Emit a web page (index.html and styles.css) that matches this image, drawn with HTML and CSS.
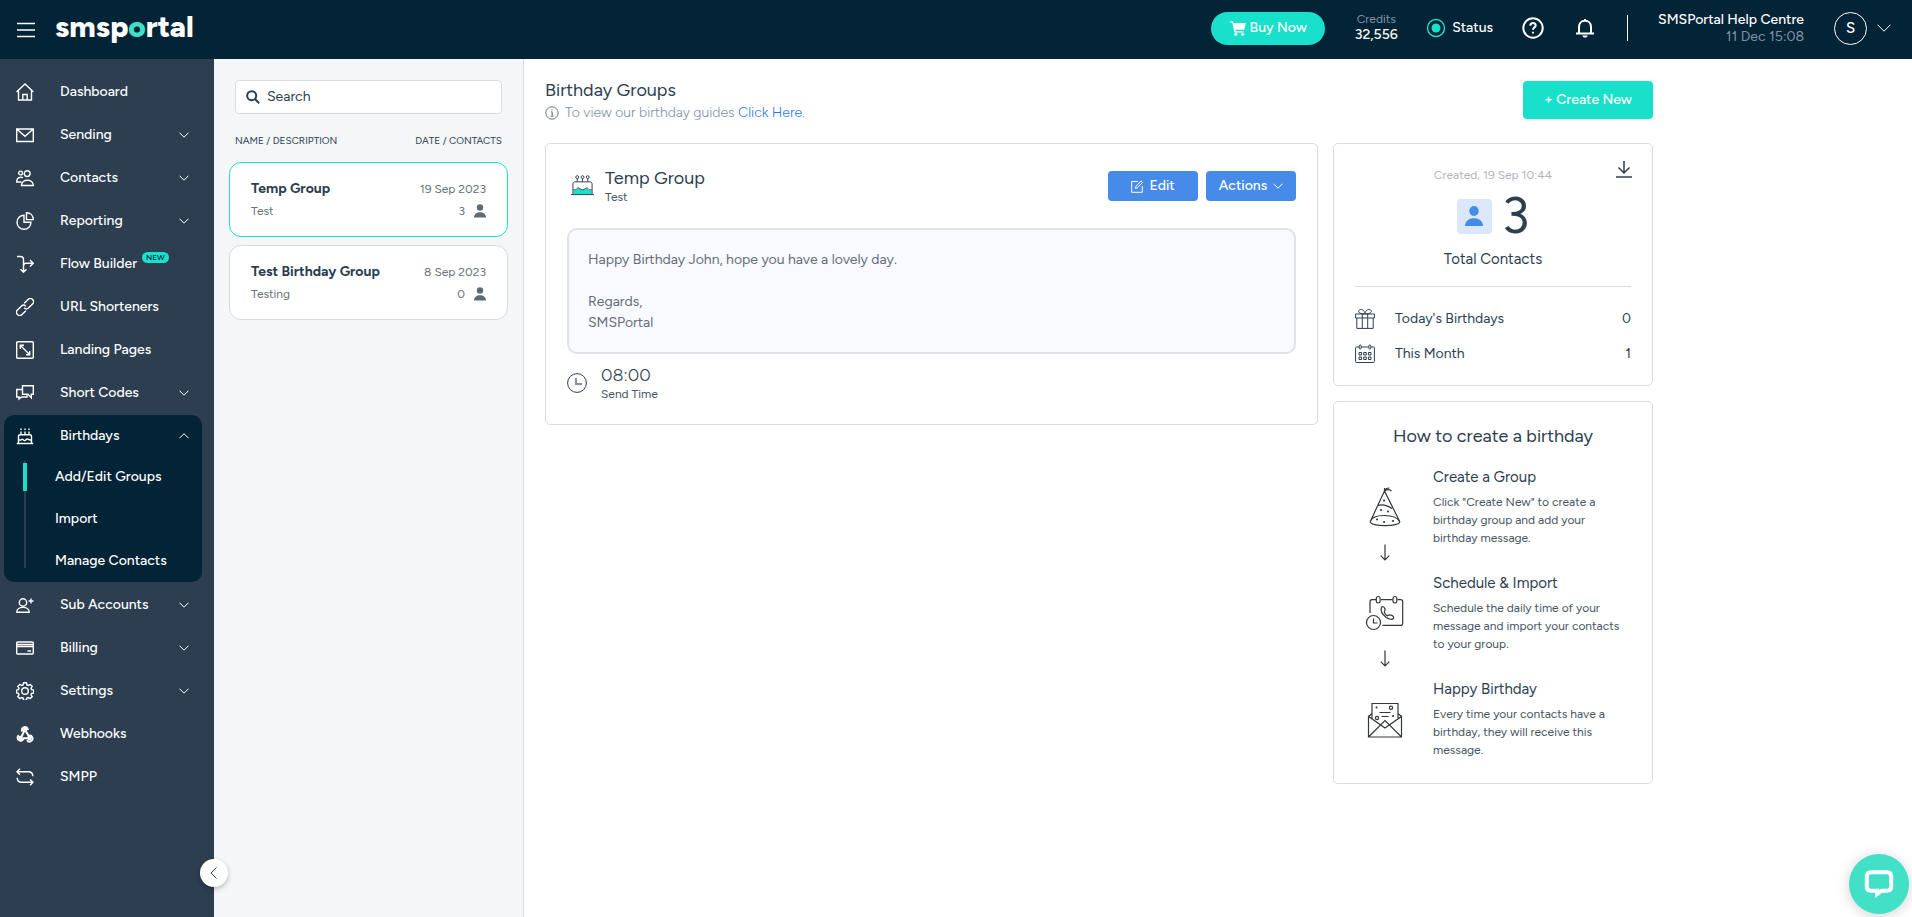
FILE: index.html
```
<!DOCTYPE html>
<html lang="en">
<head>
<meta charset="utf-8">
<meta name="viewport" content="width=device-width, initial-scale=1">
<title>Birthday Groups</title>
<link rel="stylesheet" href="styles.css">
</head>
<body>
<header class="topbar">
  <div class="brand">
    <button class="icon-btn" aria-label="Toggle menu"><svg class="i18" viewBox="0 0 18 18"><path d="M0 2.500h18M0 9h18M0 15.500h18"/></svg></button>
    <a class="logo" href="#">smsp<span class="logo-o">o</span>rtal</a>
  </div>
  <div class="top-actions">
    <button class="buy"><svg class="i16 solid" viewBox="0 0 16 16"><path d="M0 1.200h3l.5 1.800h12.300l-1.600 6.800H5.300l.3 1.400h8v1.400H4.400L2.200 2.600H0z"/><circle cx="5.800" cy="14.200" r="1.500"/><circle cx="12.600" cy="14.200" r="1.500"/></svg>Buy Now</button>
    <div class="credits"><span class="muted">Credits</span><span>32,556</span></div>
    <a class="status" href="#"><svg class="i20" viewBox="0 0 20 20"><circle class="teal-line" cx="10" cy="10" r="8.500"/><circle class="teal-fill" cx="10" cy="10" r="4.500"/></svg>Status</a>
    <button class="icon-btn help" aria-label="Help"><svg class="i22" viewBox="0 0 22 22"><circle cx="11" cy="11" r="9.700"/><path d="M8.300 8.800c0-3.700 5.400-3.500 5.400-.4 0 2-2.700 2-2.700 4.400M11 14.800v1.700"/></svg></button>
    <button class="icon-btn bell" aria-label="Notifications"><svg class="i22" viewBox="0 0 22 22"><path d="M2 16.500h18M5 16.300V10c0-8.500 12-8.500 12 0v6.300M11 3.500V2"/><path class="solid" d="M8.300 18.500h5.400c-.6 2.800-4.800 2.800-5.400 0z"/></svg></button>
    <span class="divider"></span>
    <div class="account"><span>SMSPortal Help Centre</span><span class="muted date">11 Dec 15:08</span></div>
    <button class="user" aria-label="Account menu"><span class="avatar">S</span><svg class="chev14" viewBox="0 0 14 8"><path d="M.5.700 7 7.200 13.500.700"/></svg></button>
  </div>
</header>

<div class="shell">
  <nav class="sidebar" aria-label="Main">
    <a class="nav-item" href="#"><svg class="i18" viewBox="0 0 18 18"><path d="M.5 9 9 1l8.500 8M2.500 7.500V17h13V7.500M6.800 17v-5.500h4.400V17"/></svg><span>Dashboard</span></a>
    <a class="nav-item" href="#"><svg class="i18" viewBox="0 0 18 18"><path d="M.7 3h16.600v12.500H.7zM1 3.300l8 7 8-7"/></svg><span>Sending</span><svg class="chev" viewBox="0 0 10 6"><path d="M.5.700 5 5.200 9.500.700"/></svg></a>
    <a class="nav-item" href="#"><svg class="i18" viewBox="0 0 18 18"><circle cx="11.200" cy="4.600" r="2.900"/><circle cx="4.600" cy="4" r="1.900"/><path d="M5.500 16.500h11.800c0-7-11.800-7-11.800 0zM5.500 13H.7c0-4 2.500-5.500 6.300-4.300"/></svg><span>Contacts</span><svg class="chev" viewBox="0 0 10 6"><path d="M.5.700 5 5.200 9.500.700"/></svg></a>
    <a class="nav-item" href="#"><svg class="i18" viewBox="0 0 18 18"><path d="M8 3.200a7 7 0 1 0 7 7H8zM10.500.800v6.800h6.800c0-4-2.800-6.800-6.800-6.800z"/></svg><span>Reporting</span><svg class="chev" viewBox="0 0 10 6"><path d="M.5.700 5 5.200 9.500.700"/></svg></a>
    <a class="nav-item" href="#"><svg class="i18" viewBox="0 0 18 18"><path d="M1 1.500h3.500c2 0 3 1 3 3V17M4.500 14.200l3 3 3-3M7.500 11c0-2 1-2.700 2.500-2.700h7M14 5l3.300 3.300-3.300 3.300"/></svg><span>Flow Builder</span><b class="new">NEW</b></a>
    <a class="nav-item" href="#"><svg class="i18" viewBox="0 0 18 18"><g transform="rotate(-45 9 9)"><path d="M7 12.200H1.500a3.200 3.200 0 0 1 0-6.400H7a3.200 3.200 0 0 1 3.200 3.200M11 5.800h5.500a3.200 3.200 0 0 1 0 6.400H11A3.200 3.200 0 0 1 7.800 9"/></g></svg><span>URL Shorteners</span></a>
    <a class="nav-item" href="#"><svg class="i18" viewBox="0 0 18 18"><rect x=".7" y=".7" width="16.600" height="16.600" rx="1"/><path d="m4.500 4.500 9 9M4.300 8V4.300H8M13.700 10v3.700H10"/></svg><span>Landing Pages</span></a>
    <a class="nav-item" href="#"><svg class="i18" viewBox="0 0 18 18"><path d="M6.500 1.700h10.800v8.500h-2v3.500L12 10.200H6.500zM6.500 5.500H.7V13H3v2l2.500-2H11v-2.500"/></svg><span>Short Codes</span><svg class="chev" viewBox="0 0 10 6"><path d="M.5.700 5 5.200 9.500.700"/></svg></a>
    <div class="nav-group">
      <a class="nav-item" href="#"><svg class="i18" viewBox="0 0 18 18"><path d="M.8 16.500h16.400M2.500 16.500V9.300c0-1 .7-1.600 1.600-1.600h9.800c.9 0 1.600.6 1.600 1.600v7.200M2.500 12.500c2.200 2 3.300-1 4.400 0s1.800 2 3.300 0 2.600 2 5.300 0M5 7.700V4.500M9 7.700V4.500M13 7.700V4.500M5 3V1.500M9 3V1.500M13 3V1.500"/></svg><span>Birthdays</span><svg class="chev" viewBox="0 0 10 6"><path d="M.5 5.200 5 .700l4.500 4.500"/></svg></a>
      <div class="subnav">
        <a class="sub active" href="#">Add/Edit Groups</a>
        <a class="sub" href="#">Import</a>
        <a class="sub" href="#">Manage Contacts</a>
      </div>
    </div>
    <a class="nav-item" href="#"><svg class="i18" viewBox="0 0 18 18"><circle cx="7" cy="6.500" r="3.700"/><path d="M.8 16.200h12.400c0-6.500-12.400-6.500-12.400 0zM15 2.500v5M12.500 5h5"/></svg><span>Sub Accounts</span><svg class="chev" viewBox="0 0 10 6"><path d="M.5.700 5 5.200 9.500.700"/></svg></a>
    <a class="nav-item" href="#"><svg class="i18" viewBox="0 0 18 18"><rect x=".7" y="3" width="16.600" height="12" rx="1"/><path d="M1 5.500h16M1 7.500h16M11.500 12H15"/></svg><span>Billing</span><svg class="chev" viewBox="0 0 10 6"><path d="M.5.700 5 5.200 9.500.700"/></svg></a>
    <a class="nav-item" href="#"><svg class="i18" viewBox="0 0 18 18"><circle cx="9" cy="9" r="3.300"/><path d="M7.500.800h3l.4 2.100 1.400.600 1.800-1.200 2.100 2.100-1.200 1.800.6 1.400 2.100.400v3l-2.100.400-.6 1.400 1.200 1.800-2.100 2.100-1.800-1.200-1.400.6-.4 2.100h-3l-.4-2.100-1.400-.6-1.800 1.200-2.100-2.100 1.200-1.800-.6-1.400L.5 11V8l1.900-.4.6-1.400-1.200-1.800 2.100-2.100 1.800 1.200 1.400-.6z"/></svg><span>Settings</span><svg class="chev" viewBox="0 0 10 6"><path d="M.5.700 5 5.200 9.500.700"/></svg></a>
    <a class="nav-item" href="#"><svg class="i18 thick" viewBox="0 0 18 18"><circle cx="9" cy="5" r="1.200"/><circle cx="4.500" cy="13" r="1.200"/><circle cx="13.500" cy="13" r="1.200"/><path d="M6.300 6.500a3 3 0 1 1 5.600-1.500M8.500 5.500 5 12.500M2.800 10.300a3 3 0 1 0 4.700 3h5.500M9.500 5.500l3 5.200a3 3 0 1 1-1.500 4.500"/></svg><span>Webhooks</span></a>
    <a class="nav-item" href="#"><svg class="i18" viewBox="0 0 18 18"><path d="M4 .800 1 3.700l3 3M1.300 3.700h11c3 0 4.500 1.500 4.500 4.500M14 11.500l3 2.800-3 3M16.700 14.300h-11c-3 0-4.500-1.500-4.500-4.500"/></svg><span>SMPP</span></a>
    <button class="collapse" aria-label="Collapse sidebar"><svg viewBox="0 0 8 12" width="8" height="12"><path d="M6.500.500 1 6l5.500 5.500"/></svg></button>
  </nav>

  <aside class="groups">
    <label class="search"><svg class="i14" viewBox="0 0 14 14"><circle cx="5.700" cy="5.700" r="4.500"/><path d="m9 9 4.200 4.200"/></svg><input type="text" placeholder="Search" aria-label="Search"></label>
    <div class="list-head"><span>NAME / DESCRIPTION</span><span>DATE / CONTACTS</span></div>
    <a class="group selected" href="#">
      <span class="row"><strong>Temp Group</strong><span>19 Sep 2023</span></span>
      <span class="row"><span>Test</span><span class="count">3<svg viewBox="0 0 12 14" width="12" height="14"><circle cx="6" cy="3.500" r="3.200"/><path d="M0 13.500C0 6.500 12 6.500 12 13.500z"/></svg></span></span>
    </a>
    <a class="group" href="#">
      <span class="row"><strong>Test Birthday Group</strong><span>8 Sep 2023</span></span>
      <span class="row"><span>Testing</span><span class="count">0<svg viewBox="0 0 12 14" width="12" height="14"><circle cx="6" cy="3.500" r="3.200"/><path d="M0 13.500C0 6.500 12 6.500 12 13.500z"/></svg></span></span>
    </a>
  </aside>

  <main class="main">
    <div class="page-head">
      <div>
        <h1>Birthday Groups</h1>
        <p class="hint"><svg viewBox="0 0 14 14" width="14" height="14"><circle cx="7" cy="7" r="6.200"/><path d="M6 6h1.200v4M5.600 10.200h3M7 3.300v1.300"/></svg><span>To view our birthday guides <a href="#">Click Here</a>.</span></p>
      </div>
      <button class="create">+ Create New</button>
    </div>
    <div class="columns">
      <section class="card detail">
        <div class="detail-head">
          <svg class="cake" viewBox="0 0 24 22"><path class="teal-fill" d="M2.500 21v-5c3 2 3.500-1.500 5-1.500s2 2 4.500 2 3-2 4.500-2 2 3.500 5 1.500v5z"/><path d="M0 21h24M2 21V10c0-1.500 1-2.300 2.300-2.300h15.400c1.300 0 2.300.8 2.300 2.300v11M2.500 15.500c3 2 3.500-1.500 5-1.500s2 2 4.500 2 3-2 4.500-2 2 3.500 5 1.500M6.500 7.500V4.500M12 7.500V4.500M17.500 7.500V4.500"/><circle cx="6.500" cy="2.800" r="1.500"/><circle cx="12" cy="2.800" r="1.500"/><circle cx="17.500" cy="2.800" r="1.500"/></svg>
          <div class="grow"><h2>Temp Group</h2><p class="small">Test</p></div>
          <button class="action"><svg viewBox="0 0 12 13" width="12" height="13"><path d="M7 1.500H.7v10.800h10.600V6M4.500 8.500l.5-2.300L10 .9l1.500 1.500-5 5.400z"/></svg>Edit</button>
          <button class="action">Actions<svg viewBox="0 0 10 6" width="10" height="6"><path d="M.5.700 5 5.200 9.500.700"/></svg></button>
        </div>
        <div class="message">Happy Birthday John, hope you have a lovely day.<br><br>Regards,<br>SMSPortal</div>
        <div class="send">
          <svg viewBox="0 0 20 20" width="20" height="20"><circle cx="10" cy="10" r="9.400"/><path class="hands" d="M9 5v6h6"/></svg>
          <div><p class="time">08:00</p><p class="small">Send Time</p></div>
        </div>
      </section>
      <div class="side">
        <section class="card stats">
          <button class="download" aria-label="Download"><svg viewBox="0 0 16 17" width="16" height="17"><path d="M8 0v12M2.500 6.500 8 12l5.500-5.500M0 16h16"/></svg></button>
          <p class="created">Created, 19 Sep 10:44</p>
          <div class="total"><span class="tile"><svg viewBox="0 0 18 20" width="18" height="20"><ellipse cx="9" cy="5" rx="4.700" ry="5"/><path d="M0 20c0-10.500 18-10.500 18 0z"/></svg></span><span class="num">3</span></div>
          <p class="total-label">Total Contacts</p>
          <hr>
          <div class="stat"><svg viewBox="0 0 20 20" width="20" height="20"><path d="M.6 5h18.800v4H.6zM1.800 9v10.400h16.400V9M7.300 5v14M12.700 5v14M10 4.800C8 5 3.500 4.500 3.700 2.300 4-1 9.500 0 10 4.800c.5-4.800 6-5.800 6.300-2.500C16.500 4.500 12 5 10 4.800z"/></svg><span class="grow">Today's Birthdays</span><span>0</span></div>
          <div class="stat"><svg viewBox="0 0 20 20" width="20" height="20"><path d="M4 3H1.500C1 3 .6 3.400.6 4v13.500c0 .6.4 1 1 1h16.800c.6 0 1-.4 1-1V4c0-.6-.4-1-1-1H16M6.500 3h7"/><rect x="4.200" y="1" width="2" height="4" rx="1"/><rect x="13.800" y="1" width="2" height="4" rx="1"/><path d="M4 8.500h2.600V11H4zM8.700 8.500h2.600V11H8.700zM13.400 8.500H16V11h-2.600zM4 13h2.600v2.500H4zM8.700 13h2.600v2.500H8.700zM13.400 13H16v2.500h-2.600z"/></svg><span class="grow">This Month</span><span>1</span></div>
        </section>
        <section class="card howto">
          <h2>How to create a birthday</h2>
          <div class="step">
            <div class="art">
              <svg viewBox="0 0 32 40" width="32" height="40"><path d="M15.500 4 1.300 34.500c-.8 5.500 30.200 5.500 29.400 0zM1.300 34.500C4 26 27 27 30.500 34.500M9 18.500c5-1.800 9.500 0 14 3M15.500 4c1-3 3-3 5-3M15.500 4c2-1.500 5-1.500 7 0M15.500 4V1"/><path class="dots" d="M15 13.500h.1M12 23h.1M19 24.500h.1M8 32.500h.1M15 35h.1M24 34h.1"/></svg>
              <svg class="arrow" viewBox="0 0 10 17" width="10" height="17"><path d="M5 .500v15.500M.700 11.700 5 16l4.300-4.300"/></svg>
            </div>
            <div><h3>Create a Group</h3><p>Click "Create New" to create a birthday group and add your birthday message.</p></div>
          </div>
          <div class="step">
            <div class="art">
              <svg viewBox="0 0 40 40" width="40" height="40"><path d="M5 20V9c0-1.500.8-2.300 2-2.300h4M16 6.700h11.500M32.500 6.700h3.200c1.200 0 2 .8 2 2v21.500c0 1.500-.8 2.200-2 2.200H17.500"/><rect x="11.300" y="3.500" width="3.800" height="6.500" rx="1.900"/><rect x="28" y="3.500" width="3.800" height="6.500" rx="1.900"/><circle cx="8.500" cy="29.500" r="7"/><path d="M8.500 25.500v4.500h4M16.500 14.200c2-2 4.800 2.300 3 4.200-1 1 1.800 4 3.200 4.500 2-2.500 7 .3 5.800 2.300C27 29 14 22.500 16.500 14.200z"/></svg>
              <svg class="arrow" viewBox="0 0 10 17" width="10" height="17"><path d="M5 .500v15.500M.700 11.700 5 16l4.300-4.300"/></svg>
            </div>
            <div><h3>Schedule &amp; Import</h3><p>Schedule the daily time of your message and import your contacts to your group.</p></div>
          </div>
          <div class="step">
            <div class="art">
              <svg viewBox="0 0 36 40" width="36" height="40"><path d="M1.500 17.500V38h33V17.500L18 29zM1.500 38 18 21.500 34.500 38M1.500 17.500 5 14.500M34.500 17.500 31 14.500M5 20V4.500h26V20M12.500 13.500h11M14.500 17.500h7"/><circle cx="24" cy="8.700" r="1.600"/><circle cx="10" cy="19" r="1.600"/><path class="dots" d="M9.500 8.500h.1M26 17h.1"/></svg>
            </div>
            <div><h3>Happy Birthday</h3><p>Every time your contacts have a birthday, they will receive this message.</p></div>
          </div>
        </section>
      </div>
    </div>
  </main>
</div>
<button class="chat" aria-label="Open chat"><svg viewBox="0 0 30 28" width="30" height="28"><path d="M7 2.300h16c2.800 0 4.200 1.400 4.200 4.200v10c0 2.800-1.400 4.200-4.200 4.200h-5.500L13.200 24v-3.300H7c-2.800 0-4.200-1.400-4.200-4.200v-10C2.800 3.700 4.200 2.300 7 2.300z"/></svg></button>
</body>
</html>
```
FILE: styles.css
```
:root {
  --navy: #032436;
  --slate: #2c3e50;
  --teal: #18e0ca;
  --blue: #478be8;
  --line: #d9dde1;
  --grey: #66717b;
}
* { box-sizing: border-box; }
body {
  margin: 0;
  min-height: 100vh;
  display: flex;
  flex-direction: column;
  font: 14px/20px Figtree, Lato, "Open Sans", sans-serif;
  color: var(--slate);
  background: #fff;
}
h1, h2, h3, p { margin: 0; font-weight: 400; }
a { color: inherit; text-decoration: none; }
button { font: inherit; color: inherit; background: none; border: 0; padding: 0; cursor: pointer; }
svg { flex: none; fill: none; stroke: currentColor; display: block; }
.i14 { width: 14px; height: 14px; }
.i16 { width: 16px; height: 16px; }
.i18 { width: 18px; height: 18px; stroke-width: 1.4; }
.i20 { width: 20px; height: 20px; }
.i22 { width: 22px; height: 22px; stroke-width: 2; }
.solid { fill: currentColor; stroke: none; }
.thick { stroke-width: 2; }
.teal-line { stroke: var(--teal); stroke-width: 1.4; }
.teal-fill { fill: var(--teal); stroke: none; }
.grow { flex: 1; }
.muted { color: #8292a5; font-weight: 400; }
.small { font-size: 12px; line-height: 16px; color: #465562; }

.topbar {
  height: 59px;
  padding: 0 21px 3px 17px;
  display: flex;
  align-items: center;
  justify-content: space-between;
  background: var(--navy);
  color: #fff;
}
.brand { display: flex; align-items: center; gap: 20px; }
.brand .icon-btn { padding-top: 4px; }
.logo { padding-bottom: 3px; font-size: 30px; line-height: 36px; font-weight: 800; }
.logo-o { color: #40e0c8; }
.top-actions { display: flex; align-items: center; font-weight: 500; }
.buy {
  display: flex;
  align-items: center;
  justify-content: center;
  gap: 4px;
  width: 114px;
  height: 33px;
  border-radius: 17px;
  background: var(--teal);
}
.credits { display: flex; flex-direction: column; align-items: center; line-height: 16px; width: 44px; margin: 0 28px 0 29px; padding-bottom: 2px; }
.credits .muted { font-size: 12px; }
.status { display: flex; align-items: center; gap: 6px; }
.help { margin-left: 29px; }
.bell { margin-left: 30px; }
.divider { width: 1px; height: 26px; background: #fff; margin: 0 30px 0 31px; }
.account { display: flex; flex-direction: column; text-align: right; line-height: 17px; }
.user { display: flex; align-items: center; gap: 10px; margin-left: 30px; }
.avatar { width: 33px; height: 33px; border: 1px solid #fff; border-radius: 50%; font-size: 15px; line-height: 31px; }
.chev14 { width: 14px; height: 8px; }

.shell { flex: 1; display: flex; }
.sidebar {
  position: relative;
  width: 214px;
  flex: none;
  padding: 11px 0;
  background: var(--slate);
  color: #fff;
  font-weight: 500;
}
.nav-item { display: flex; align-items: center; height: 43px; padding: 0 25px 0 16px; }
.nav-item > span { margin-left: 26px; }
.chev { width: 10px; height: 6px; margin-left: auto; }
.new {
  align-self: flex-start;
  margin: 10px 0 0 5px;
  padding: 0 4px;
  border-radius: 6px;
  background: var(--teal);
  color: var(--navy);
  font-size: 8px;
  font-weight: 500;
  line-height: 11px;
}
.nav-group { margin: 1px 12px 1px 4px; border-radius: 10px; background: var(--navy); }
.nav-group .nav-item { height: 41px; padding: 0 13px 0 12px; }
.subnav {
  background: linear-gradient(var(--slate), var(--slate)) 20px 5px / 2px 107px no-repeat;
}
.sub { display: flex; align-items: center; height: 42px; padding-left: 51px; }
.sub.active { background: linear-gradient(var(--teal), var(--teal)) 19px 7px / 4px 28px no-repeat; }
.collapse {
  position: absolute;
  right: -14px;
  bottom: 30px;
  width: 28px;
  height: 28px;
  border-radius: 50%;
  display: flex;
  align-items: center;
  justify-content: center;
  background: #fff;
  color: var(--slate);
  box-shadow: 0 2px 5px rgba(0, 0, 0, .25);
}

.groups { width: 310px; flex: none; padding: 21px 15px; background: #f4f6f8; border-right: 1px solid var(--line); }
.search {
  display: flex;
  align-items: center;
  gap: 7px;
  height: 34px;
  margin: 0 6px;
  padding: 0 10px;
  border: 1px solid var(--line);
  border-radius: 4px;
  background: #fff;
}
.search svg { stroke-width: 2; }
.search input { flex: 1; min-width: 0; border: 0; outline: 0; padding: 0; background: none; font: inherit; color: inherit; }
.search input::placeholder { color: inherit; opacity: 1; }
.list-head { display: flex; justify-content: space-between; margin: 17px 6px 11px; font-size: 10px; }
.group {
  display: flex;
  flex-direction: column;
  gap: 2px;
  height: 75px;
  margin-bottom: 8px;
  padding: 16px 21px 0;
  border: 1px solid #d5dae5;
  border-radius: 12px;
  background: #fff;
  font-size: 12px;
  color: var(--grey);
}
.group.selected { border-color: var(--teal); }
.row { display: flex; justify-content: space-between; }
.row strong { font-size: 14px; font-weight: 700; color: var(--slate); }
.count { display: flex; align-items: center; gap: 9px; }
.count svg { fill: #5d6b72; stroke: none; }

.main { flex: 1; min-width: 0; padding: 20px 20px 20px 21px; }
.page-head { display: flex; justify-content: space-between; max-width: 1108px; height: 64px; }
h1 { font-size: 18px; line-height: 22px; }
.hint { display: flex; align-items: center; gap: 6px; margin-top: 2px; color: #7d8fa6; font-weight: 300; }
.hint svg { color: #6b747c; stroke-width: 1; }
.hint a { color: #2478ff; }
.create { width: 130px; height: 38px; margin-top: 2px; border-radius: 4px; background: var(--teal); color: #fff; font-weight: 500; }
.columns { display: flex; align-items: flex-start; gap: 15px; max-width: 1108px; }
.card { border: 1px solid var(--line); border-radius: 5px; background: #fff; }
.detail { flex: 1; min-width: 0; padding: 23px 21px 22px; }
.detail-head { display: flex; align-items: center; gap: 8px; padding-left: 4px; margin-bottom: 23px; }
.cake { width: 23px; height: 22px; margin: 0 3px 3px 0; }
h2 { font-size: 18px; line-height: 22px; }
.action {
  display: flex;
  align-items: center;
  justify-content: center;
  gap: 6px;
  width: 90px;
  height: 30px;
  border-radius: 4px;
  background: var(--blue);
  color: #fff;
  font-weight: 500;
}
.message { padding: 19px; border: 2px solid #dfe3e8; border-radius: 10px; background: #f9faff; line-height: 21px; color: #666d78; }
.send { display: flex; align-items: center; gap: 14px; margin-top: 10px; }
.hands { stroke: #8b8f98; stroke-width: 2; }
.time { font-size: 18px; line-height: 22px; font-weight: 300; }
.side { width: 320px; flex: none; display: flex; flex-direction: column; gap: 15px; }
.stats { position: relative; padding: 21px 21px 14px; }
.download { position: absolute; right: 20px; top: 17px; }
.download svg { stroke-width: 1.5; }
.created { text-align: center; font-size: 12px; color: #b0b5ba; }
.total { display: flex; align-items: center; justify-content: center; gap: 10px; height: 62px; }
.tile { width: 35px; height: 35px; border-radius: 4px; background: #dbe7fb; display: flex; align-items: center; justify-content: center; }
.tile svg { fill: var(--blue); stroke: none; }
.num { font-size: 50px; line-height: 60px; }
.total-label { text-align: center; font-size: 15px; line-height: 24px; }
hr { border: 0; border-top: 1px solid var(--line); margin: 15px 0 14px; }
.stat { display: flex; align-items: center; gap: 20px; height: 35px; }
.howto { padding: 23px 21px 20px; }
.howto h2 { text-align: center; margin-bottom: 18px; }
.step { display: flex; gap: 18px; height: 106px; padding-right: 4px; }
.step:last-child { height: 86px; }
.art { width: 60px; flex: none; display: flex; flex-direction: column; align-items: center; gap: 17px; padding-top: 22px; }
.art svg { color: #33383d; stroke-width: 1.2; }
.art .dots { stroke-width: 2; stroke-linecap: round; }
h3 { font-size: 15px; line-height: 24px; margin-bottom: 4px; }
.step p { font-size: 12px; line-height: 18px; color: #465562; }
.chat {
  position: fixed;
  right: 3px;
  bottom: 3px;
  width: 60px;
  height: 60px;
  border-radius: 50%;
  display: flex;
  align-items: center;
  justify-content: center;
  background: #43e0c8;
  color: #fff;
  box-shadow: 0 2px 14px rgba(0, 0, 0, .18);
}
.chat svg { stroke-width: 4; }
```
